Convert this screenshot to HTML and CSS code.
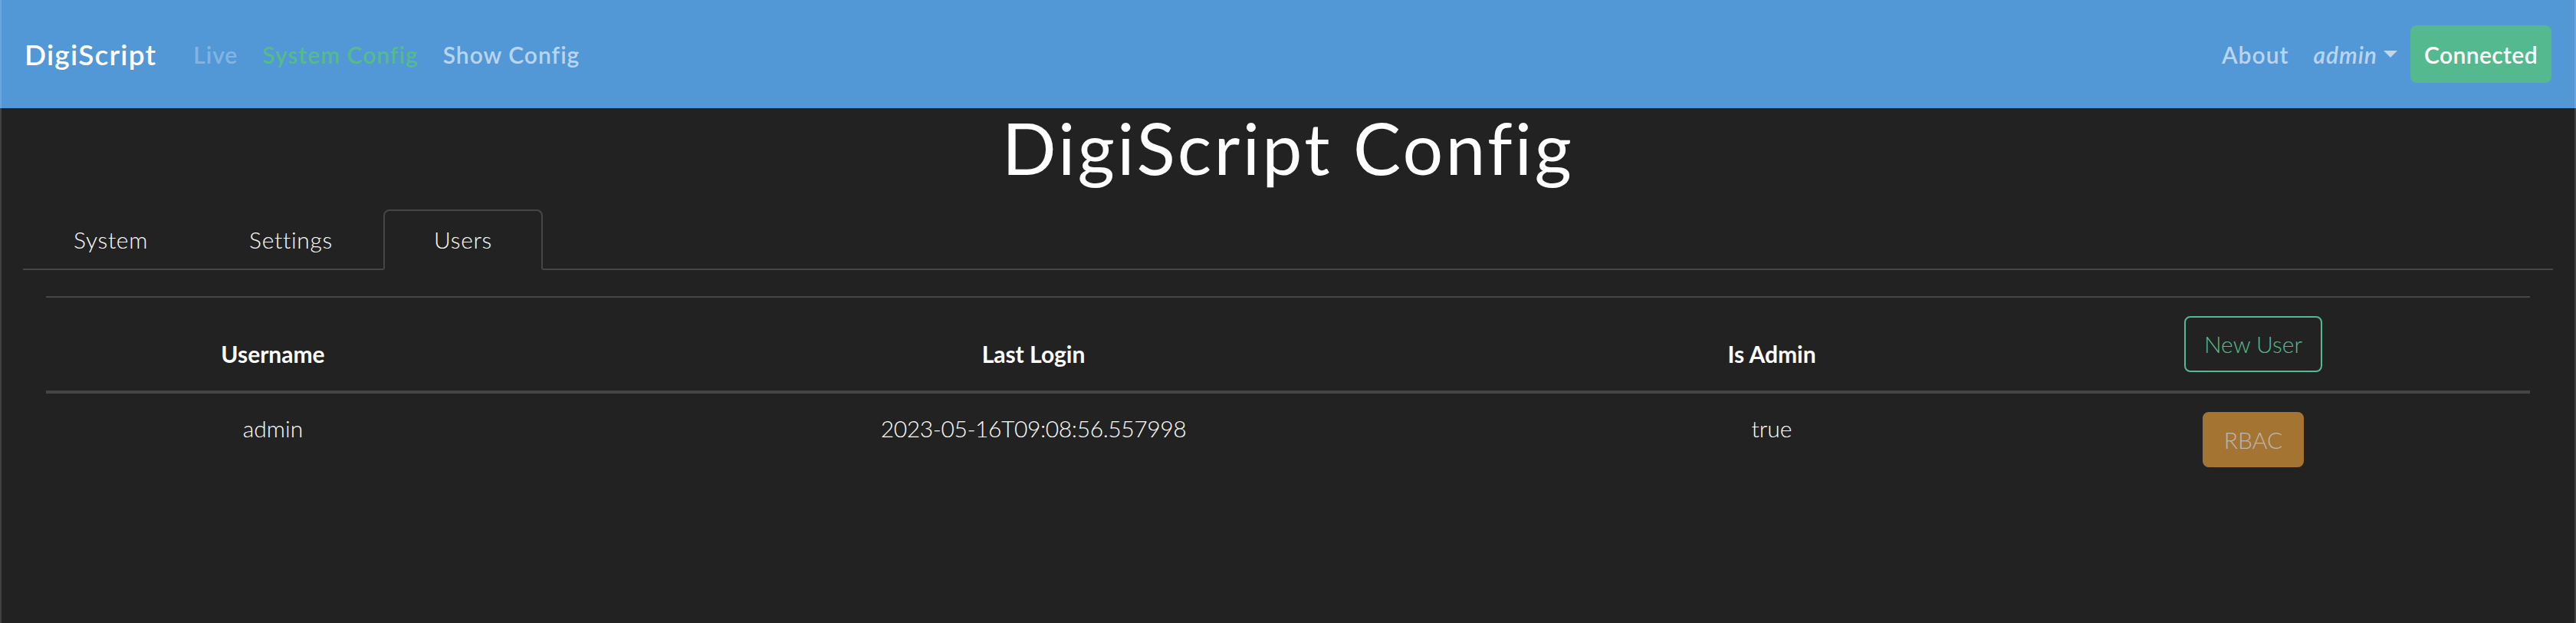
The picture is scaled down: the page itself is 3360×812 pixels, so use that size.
FILE: index.html
```html
<!DOCTYPE html>
<html lang="en">
<head>
<meta charset="utf-8">
<title>DigiScript Config</title>
<link rel="stylesheet" href="styles.css">
</head>
<body>
<nav class="navbar">
  <a class="brand" href="#">DigiScript</a>
  <ul class="nav nav-left">
    <li><a class="nav-link disabled" href="#">Live</a></li>
    <li><a class="nav-link active" href="#">System Config</a></li>
    <li><a class="nav-link" href="#">Show Config</a></li>
  </ul>
  <ul class="nav nav-right">
    <li><a class="nav-link" href="#">About</a></li>
    <li><a class="nav-link user" href="#"><em>admin</em><span class="caret"></span></a></li>
    <li><button class="btn btn-connected">Connected</button></li>
  </ul>
</nav>
<main class="page">
  <h1 class="title">DigiScript Config</h1>
  <ul class="tabs">
    <li><a class="tab" href="#">System</a></li>
    <li><a class="tab" href="#">Settings</a></li>
    <li><a class="tab active" href="#">Users</a></li>
  </ul>
  <div class="tab-content">
    <table class="users">
      <colgroup>
        <col class="c-user">
        <col class="c-login">
        <col class="c-admin">
        <col class="c-actions">
      </colgroup>
      <thead>
        <tr>
          <th>Username</th>
          <th>Last Login</th>
          <th>Is Admin</th>
          <th><button class="btn btn-outline">New User</button></th>
        </tr>
      </thead>
      <tbody>
        <tr>
          <td>admin</td>
          <td class="date">2023-05-16T09:08:56.557998</td>
          <td>true</td>
          <td><button class="btn btn-rbac">RBAC</button></td>
        </tr>
      </tbody>
    </table>
  </div>
</main>
</body>
</html>
```
FILE: styles.css
```css
* { box-sizing: border-box; }

html, body {
  margin: 0;
  padding: 0;
  background: #222222;
  color: #ffffff;
  font-family: Lato, "Open Sans", sans-serif;
  font-size: 30px;
  line-height: 48px;
}

a { text-decoration: none; color: inherit; }

ul { list-style: none; margin: 0; padding: 0; }

/* ---------- navbar ---------- */
.navbar {
  display: flex;
  align-items: center;
  height: 141px;
  padding: 0 30px;
  background: #5297d6;
  border-left: 2px solid rgba(255, 255, 255, 0.14);
  border-right: 2px solid rgba(255, 255, 255, 0.14);
}

.brand {
  color: #ffffff;
  font-size: 37px;
  font-weight: 600;
  letter-spacing: 1.2px;
  margin-right: 32px;
  line-height: 60px;
}

.nav { display: flex; align-items: center; }

.nav-right { margin-left: auto; }

.nav-link {
  display: block;
  padding: 0 16px;
  font-weight: 600;
  letter-spacing: 1px;
  color: rgba(255, 255, 255, 0.62);
}

.nav-link.disabled { color: rgba(255, 255, 255, 0.3); }
.nav-link.active { color: #56bb8b; }

.nav-link.user { display: flex; align-items: center; padding-right: 17px; }
.nav-link.user em { font-style: italic; }

.caret {
  display: inline-block;
  margin-left: 8px;
  width: 0;
  height: 0;
  border-top: 9px solid rgba(255, 255, 255, 0.62);
  border-left: 9px solid transparent;
  border-right: 9px solid transparent;
}

.btn {
  font-family: inherit;
  font-size: 30px;
  border-radius: 8px;
  cursor: pointer;
}

.btn-connected {
  display: block;
  height: 75px;
  padding: 0 16px;
  background: #55b98f;
  border: 2px solid #55b98f;
  color: #ffffff;
  font-weight: 600;
  letter-spacing: 0.4px;
}

/* ---------- page ---------- */
.page {
  min-height: calc(100vh - 141px);
  padding: 0 28px;
  border-left: 2px solid rgba(255, 255, 255, 0.14);
  border-right: 2px solid rgba(255, 255, 255, 0.14);
}

.title {
  margin: 0;
  text-align: center;
  font-size: 93px;
  line-height: 103px;
  font-weight: 400;
  letter-spacing: 3.3px;
}

.tabs {
  display: flex;
  margin-top: 29px;
  border-bottom: 2px solid #464646;
}

.tabs li { margin-bottom: -2px; }

.tab {
  display: block;
  padding: 14px 64px;
  line-height: 47px;
  font-weight: 300;
  border: 2px solid transparent;
  border-radius: 8px 8px 0 0;
  letter-spacing: 0.7px;
}

.tab.active {
  border-color: #464646 #464646 #222222;
}

.tab-content { padding: 34px 30px 0; }

/* ---------- table ---------- */
.users {
  width: 100%;
  border-collapse: collapse;
  table-layout: fixed;
}

.c-user { width: 592px; }
.c-login { width: 1392px; }
.c-admin { width: 534px; }
.c-actions { width: 722px; }

.users th,
.users td {
  padding: 24px;
  text-align: center;
  border-top: 2px solid #464646;
}

.users th {
  vertical-align: bottom;
  font-weight: 700;
  border-bottom: 4px solid #464646;
}

.users td {
  vertical-align: top;
  font-weight: 300;
  line-height: 42px;
}

.users td.date { letter-spacing: -0.4px; }

.users tbody tr:first-child td { border-top: 0; }

.btn-outline {
  display: inline-block;
  vertical-align: middle;
  padding: 11px 24px;
  line-height: 47px;
  background: transparent;
  border: 2px solid #55b98f;
  color: #55b98f;
  font-weight: 300;
}

.btn-rbac {
  display: inline-block;
  vertical-align: top;
  padding: 10px 26px;
  line-height: 48px;
  background: #a47433;
  border: 2px solid #a47433;
  color: #bbb7b0;
  font-weight: 300;
  border-radius: 8px;
}
```
